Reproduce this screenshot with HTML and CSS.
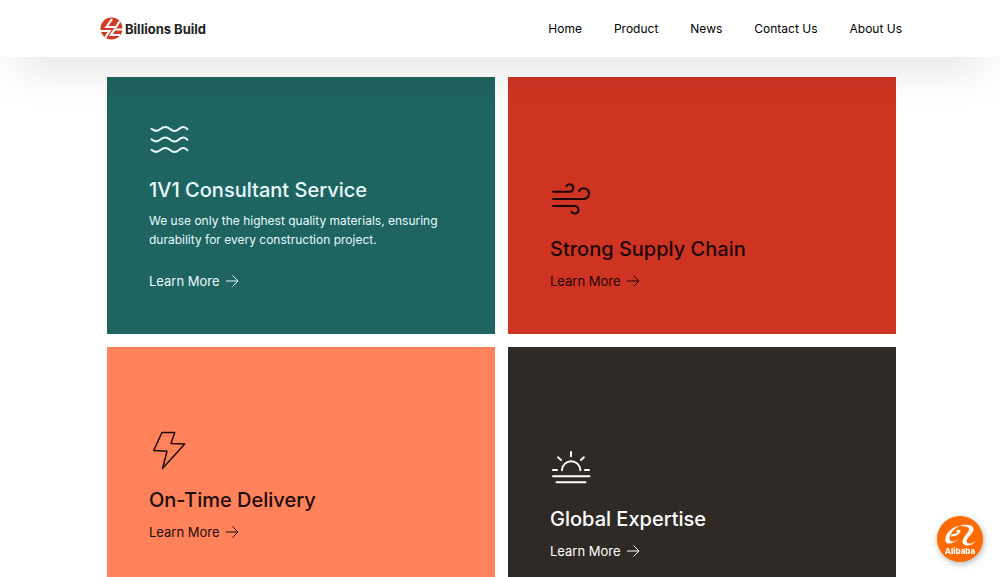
FILE: index.html
```html
<!DOCTYPE html>
<html lang="en">
<head>
<meta charset="UTF-8">
<meta name="viewport" content="width=device-width, initial-scale=1.0">
<title>Billions Build</title>
<link rel="stylesheet" href="styles.css">
</head>
<body>

<header class="site-header">
<a class="logo" href="#">
<svg class="logo-mark" viewBox="0 0 23 23" aria-hidden="true">
<circle cx="11.5" cy="11.5" r="11" fill="#d23a26"/>
<path d="M12 2L6.500 10H16L19.500 4.500M0 14H9.500L5 21M23 12.500H14.500L11 18H20" fill="none" stroke="#fff" stroke-width="2.200"/>
</svg>
<span>Billions Build</span>
</a>
<nav class="main-nav">
<a href="#">Home</a>
<a href="#">Product</a>
<a href="#">News</a>
<a href="#">Contact Us</a>
<a href="#">About Us</a>
</nav>
</header>

<main class="services">
<section class="card card-teal">
<svg class="card-icon" viewBox="0 0 42 42" aria-hidden="true">
<path d="M2.500 8.800C6 12 8.500 11.500 11.500 9S18 6.500 21 9S27 11.700 30 9S36 6.500 38.500 9.300"/>
<path d="M2.500 19.300C6 22.500 8.500 22 11.500 19.500S18 17 21 19.500S27 22.200 30 19.500S36 17 38.500 19.800"/>
<path d="M2.500 29.800C6 33 8.500 32.500 11.500 30S18 27.500 21 30S27 32.700 30 30S36 27.500 38.500 30.300"/>
</svg>
<h2>1V1 Consultant Service</h2>
<p>We use only the highest quality materials, ensuring durability for every construction project.</p>
<a class="learn-more" href="#">Learn More <svg class="arrow" viewBox="0 0 14 14" aria-hidden="true"><path d="M1 7H13M7.500 1.500L13 7L7.500 12.500"/></svg></a>
</section>

<section class="card card-red">
<svg class="card-icon" viewBox="0 0 42 42" aria-hidden="true">
<path d="M3 12.700H19.500A3.700 3.700 0 1 0 16.300 7.300"/>
<path d="M3 20H34.300A5.400 5.400 0 1 0 29 12"/>
<path d="M3 27H24.800A3.800 3.800 0 1 1 21.500 32.700"/>
</svg>
<h2>Strong Supply Chain</h2>
<a class="learn-more" href="#">Learn More <svg class="arrow" viewBox="0 0 14 14" aria-hidden="true"><path d="M1 7H13M7.500 1.500L13 7L7.500 12.500"/></svg></a>
</section>

<section class="card card-orange">
<svg class="card-icon" viewBox="0 0 42 42" aria-hidden="true">
<path d="M13 2.500H25.700L22 13.500L35.700 14L13.500 38.500L18 21.300L4.700 20.500Z"/>
</svg>
<h2>On-Time Delivery</h2>
<a class="learn-more" href="#">Learn More <svg class="arrow" viewBox="0 0 14 14" aria-hidden="true"><path d="M1 7H13M7.500 1.500L13 7L7.500 12.500"/></svg></a>
</section>

<section class="card card-dark">
<svg class="card-icon" viewBox="0 0 42 42" aria-hidden="true">
<path d="M12 21.300V20.500A9.200 9.200 0 0 1 30.300 20.500V21.300"/>
<path d="M21 3V7.300M8 8.300L11 11M33.900 8.300L30.900 11M3 21H7M35 21H39"/>
<path d="M3 27.300H39.500M6.500 33.300H35.500"/>
</svg>
<h2>Global Expertise</h2>
<a class="learn-more" href="#">Learn More <svg class="arrow" viewBox="0 0 14 14" aria-hidden="true"><path d="M1 7H13M7.500 1.500L13 7L7.500 12.500"/></svg></a>
</section>
</main>

<!-- Floating shop button -->
<button class="alibaba" type="button">
<svg class="alibaba-mark" viewBox="0 0 36 24" aria-hidden="true">
<path d="M18 3C10 3 2 12 3.500 18C5 23 13 20 17 15.500C13 19 8 19.500 7.500 16C7 12 12 5 18 3Z"/>
<path d="M9 12.500C13 12.500 17 10.500 17.500 8.500C17.700 7.300 16 7.500 14.500 8.200" class="stroke"/>
<path d="M17 3C23 1 31 1 31.500 6C31.800 10 25 14.500 24.500 18C24.300 21.500 31 21 34.500 17.500C31 23 21 24.500 20.500 19C20.500 14 27.500 9.500 27 6C26.500 3 21 3 17 3Z"/>
</svg>
<span>Alibaba</span>
</button>

</body>
</html>
```
FILE: styles.css
```css
* {
box-sizing: border-box;
}

body {
margin: 0;
background: #fff;
color: #000;
font-family: Inter, "Liberation Sans", sans-serif;
}

a {
color: inherit;
text-decoration: none;
}

/* Header */
.site-header {
position: sticky;
top: 0;
z-index: 2;
display: flex;
justify-content: space-between;
align-items: center;
height: 57px;
padding: 0 98px 0 100px;
background: #fff;
box-shadow: 0 20px 48px -16px rgba(0, 0, 0, 0.2);
}

.logo {
display: flex;
align-items: center;
gap: 2px;
font-size: 13px;
font-weight: 700;
color: #222;
}

.logo-mark {
width: 23px;
height: 23px;
}

.main-nav {
display: flex;
gap: 32px;
font-size: 12px;
font-weight: 400;
}

/* Service cards */
.services {
display: grid;
grid-template-columns: 1fr 1fr;
gap: 13px;
padding: 20px 104px 20px 107px;
}

.card {
display: flex;
flex-direction: column;
justify-content: flex-end;
align-items: flex-start;
min-height: 257px;
padding: 42px;
}

.card-icon {
width: 42px;
height: 42px;
margin-bottom: 13px;
fill: none;
stroke: currentColor;
stroke-width: 2;
stroke-linecap: round;
stroke-linejoin: round;
}

.card h2 {
margin: 0;
font-size: 20px;
font-weight: 500;
line-height: 30px;
}

.card p {
margin: 6px 0 21px;
font-size: 12px;
font-weight: 400;
line-height: 19px;
}

.learn-more {
display: flex;
align-items: center;
gap: 5px;
font-size: 13px;
line-height: 22px;
}

.card h2 + .learn-more {
margin-top: 6px;
}

.arrow {
width: 14px;
height: 14px;
fill: none;
stroke: currentColor;
}

.card-teal {
background: #1e6460;
color: #e9fbfb;
}

.card-red {
background: #cf3422;
color: #1c0606;
}

.card-orange {
padding-bottom: 61px;
background: #ff825a;
color: #1c0c08;
}

.card-orange .card-icon {
stroke-width: 1.5;
}

.card-dark {
background: #2f2a25;
color: #fff;
}

/* Floating button */
.alibaba {
position: fixed;
right: 17px;
bottom: 15px;
display: flex;
flex-direction: column;
align-items: center;
width: 46px;
height: 46px;
padding: 7px 0 0;
border: 0;
border-radius: 50%;
background: #ff6a00;
box-shadow: 1px 2px 6px rgba(0, 0, 0, 0.3);
color: #fff;
font-family: Inter, "Liberation Sans", sans-serif;
font-size: 8px;
font-weight: 800;
line-height: 9px;
}

.alibaba-mark {
width: 36px;
height: 24px;
fill: #fff;
}

.alibaba-mark .stroke {
fill: none;
stroke: #fff;
stroke-width: 2;
}
```
